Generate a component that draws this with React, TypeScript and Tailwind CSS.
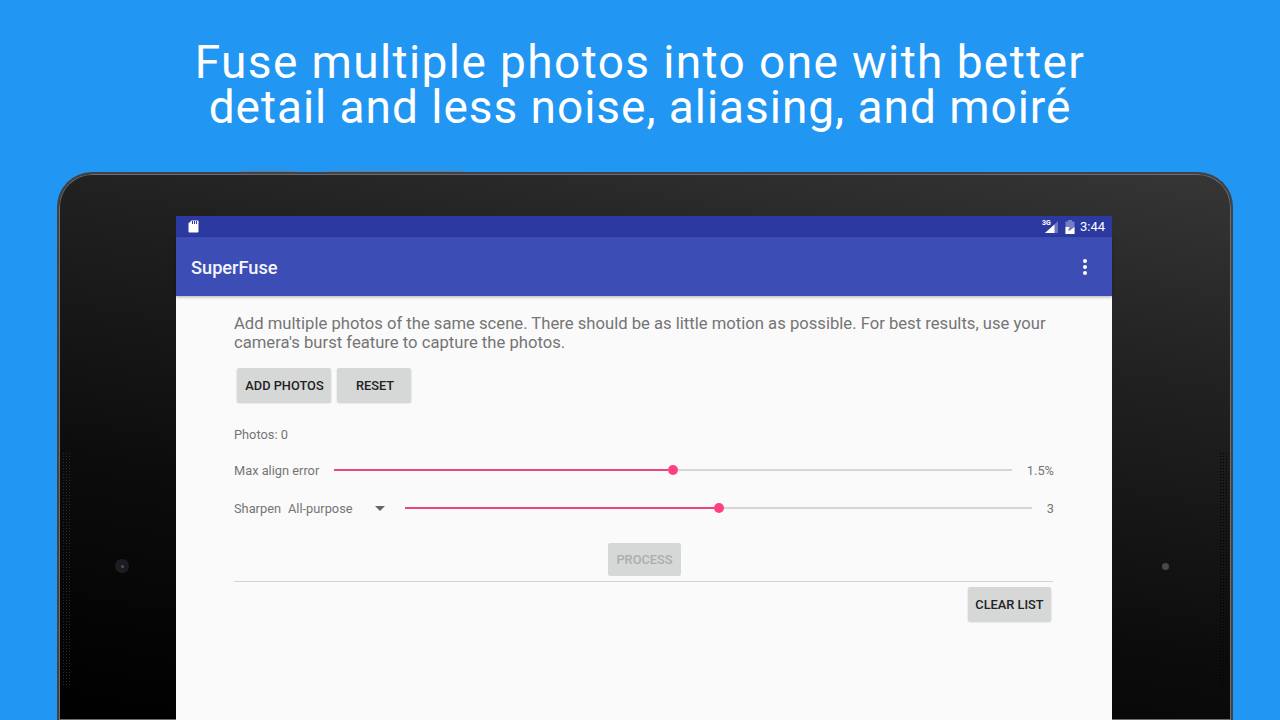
import React from "react";

function Btn({ label, className, disabled }: { label: string; className: string; disabled?: boolean }) {
  return (
    <div
      className={
        "flex items-center justify-center rounded-[2px] bg-[#d6d7d7] pt-[2px] text-[12.8px] font-medium leading-none " +
        (disabled ? "text-[#adadad] " : "text-[#222222] shadow-[0_1px_2px_rgba(0,0,0,0.2)] ") +
        className
      }
    >
      {label}
    </div>
  );
}

function Slider({ percent, className }: { percent: number; className: string }) {
  return (
    <div className={"flex h-[10px] items-center " + className}>
      <div className="h-[2px] bg-[#ec4583]" style={{ width: `${percent}%` }} />
      <div className="h-[10px] w-[10px] shrink-0 rounded-full bg-[#ff4081]" />
      <div className="h-[2px] flex-1 bg-[#d6d6d6]" />
    </div>
  );
}

export default function App() {
  return (
    <div className="flex h-[720px] w-[1280px] flex-col overflow-hidden bg-[#2196f3] font-['Roboto',sans-serif]">
      <div className="flex h-[172px] shrink-0 flex-col items-center pt-[40px] font-['Roboto',sans-serif] text-[46px] font-normal leading-[45px] text-white">
        <div className="tracking-[1.4px]">Fuse multiple photos into one with better</div>
        <div className="tracking-[0.97px]">detail and less noise, aliasing, and moiré</div>
      </div>

      <div className="relative ml-[57px] flex h-[548px] w-[1176px] shrink-0 justify-center rounded-t-[35px] border-x-[2px] border-t-[2px] border-[#3f4246] bg-[linear-gradient(190deg,#363636_0%,#222222_27%,#0c0c0c_65%,#000000_100%)] pt-[42px] pr-[2px] shadow-[inset_0_0_0_1px_#6a6d72]">
        <div className="absolute left-[182px] top-[-3px] h-[1px] w-[56px] bg-[#6a7c8c]" />
        <div className="absolute left-[268px] top-[-3px] h-[1px] w-[136px] bg-[#6a7c8c]" />
        <div className="absolute left-[3px] top-[278px] h-[234px] w-[8px] bg-[radial-gradient(#2c2c2c_0.7px,transparent_0.9px)] bg-[length:3px_3px]" />
        <div className="absolute right-[4px] top-[278px] h-[234px] w-[8px] bg-[radial-gradient(#000000_0.7px,transparent_0.9px)] bg-[length:3px_3px]" />
        <div className="absolute left-[56px] top-[385px] flex h-[14px] w-[14px] items-center justify-center rounded-full bg-[#1c1c22]">
          <div className="h-[3px] w-[3px] rounded-full bg-[#50505c]" />
        </div>
        <div className="absolute left-[1103px] top-[389px] h-[7px] w-[7px] rounded-full bg-[#484848]" />

        <div className="flex w-[936px] shrink-0 flex-col bg-[#fafafa]">
          <div className="flex h-[21px] shrink-0 items-center bg-[#2c39a0] pl-[12px] pr-[7px]">
            <svg width="11" height="13" viewBox="0 0 11 13" fill="#ffffff">
              <path d="M3.5 0.5H9.5a1 1 0 0 1 1 1V11.5a1 1 0 0 1-1 1H1.5a1 1 0 0 1-1-1V3.5Z" />
              <rect x="4" y="1" width="1" height="3" fill="#2c39a0" />
              <rect x="6" y="1" width="1" height="3" fill="#2c39a0" />
              <rect x="8" y="1" width="1" height="3" fill="#2c39a0" />
            </svg>
            <div className="flex-1" />
            <div className="relative mr-[7px] h-[14px] w-[16px]">
              <svg width="16" height="14" viewBox="0 0 16 14" className="absolute left-0 top-0">
                <path d="M16 1V13H3Z" fill="#ffffff" fillOpacity="0.3" />
                <path d="M12.5 4.5V13H3Z" fill="#ffffff" />
              </svg>
              <span className="absolute left-0 top-[-1px] text-[7px] font-bold leading-[8px] text-white">3G</span>
            </div>
            <svg width="10" height="14" viewBox="0 0 10 14" className="mr-[5px]">
              <path d="M3 0H7V1.5H9.5V14H0.5V1.5H3Z" fill="#ffffff" fillOpacity="0.35" />
              <path d="M0.5 7H4.5L3 10.5H5L9.5 7V14H0.5Z" fill="#ffffff" />
            </svg>
            <span className="text-[13px] leading-none text-white">3:44</span>
          </div>

          <div className="z-10 flex h-[59px] shrink-0 items-center justify-between bg-[#3d4db6] pl-[15px] pr-[25px] shadow-[0_1px_3px_rgba(0,0,0,0.3)]">
            <span className="pt-[3px] text-[18.2px] font-medium text-[#f4f5fb]">SuperFuse</span>
            <div className="flex flex-col gap-[2px]">
              <div className="h-[4px] w-[4px] rounded-full bg-white" />
              <div className="h-[4px] w-[4px] rounded-full bg-white" />
              <div className="h-[4px] w-[4px] rounded-full bg-white" />
            </div>
          </div>

          <div className="flex flex-1 flex-col pl-[58px] pr-[59px] pt-[18px] text-[#757575]">
            <p className="text-[16.65px] leading-[19px]">
              Add multiple photos of the same scene. There should be as little motion as possible. For best results, use your
              <br />
              camera's burst feature to capture the photos.
            </p>
            <div className="mt-[16px] flex gap-[6px] pl-[3px]">
              <Btn label="ADD PHOTOS" className="h-[34px] w-[94px] pl-[1px]" />
              <Btn label="RESET" className="h-[34px] w-[74px] pl-[2px]" />
            </div>
            <div className="mt-[25px] text-[12.8px] leading-[16px]">Photos: 0</div>
            <div className="mt-[19px] flex h-[16px] items-center text-[12.8px]">
              <span className="w-[100px] shrink-0 pt-[2px]">Max align error</span>
              <Slider percent={49.3} className="w-[678px]" />
              <span className="mr-[-1px] flex-1 pt-[2px] text-right">1.5%</span>
            </div>
            <div className="mt-[22px] flex h-[16px] items-center text-[12.8px]">
              <span className="w-[54px] shrink-0 pt-[2px]">Sharpen</span>
              <span className="w-[87px] shrink-0 pt-[2px]">All-purpose</span>
              <svg width="10" height="5" viewBox="0 0 10 5" className="mr-[20px] shrink-0" fill="#666666">
                <path d="M0 0H10L5 5Z" />
              </svg>
              <Slider percent={49.3} className="w-[627px]" />
              <span className="mr-[-1px] flex-1 pt-[2px] text-right">3</span>
            </div>
            <div className="mt-[27px] flex justify-center pl-[2px]">
              <Btn label="PROCESS" disabled className="h-[33px] w-[73px]" />
            </div>
            <div className="mt-[5px] h-[1px] bg-[#d4d4d4]" />
            <div className="mt-[5px] flex justify-end pr-[2px]">
              <Btn label="CLEAR LIST" className="h-[34px] w-[83px]" />
            </div>
          </div>
        </div>
      </div>
    </div>
  );
}
